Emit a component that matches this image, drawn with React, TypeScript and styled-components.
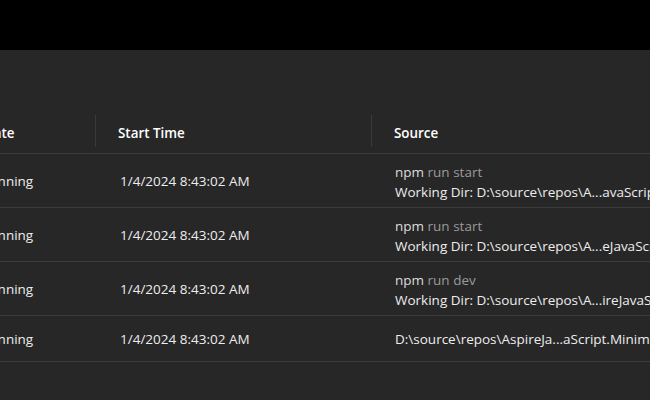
import styled, { createGlobalStyle } from "styled-components";

const GlobalStyle = createGlobalStyle`
  html, body {
    margin: 0;
    padding: 0;
    background: #272727;
    overflow: hidden;
  }
  body {
    font-family: "Open Sans", "Noto Sans", sans-serif;
  }
`;

const Page = styled.div`
  width: 650px;
  height: 400px;
  display: flex;
  flex-direction: column;
  background: #272727;
  overflow: hidden;
`;

const TopBar = styled.div`
  height: 50px;
  flex-shrink: 0;
  background: #000000;
`;

const GridArea = styled.div`
  padding-top: 63px;
  margin-left: -42px;
`;

const Grid = styled.div`
  display: grid;
  grid-template-columns: 137px 276px 420px;
`;

const HeaderCell = styled.div<{ $divider?: boolean }>`
  position: relative;
  height: 40px;
  display: flex;
  align-items: center;
  padding-left: 23px;
  color: #ffffff;
  font-size: 13.4px;
  font-weight: 600;
  border-bottom: 1px solid #3b3b3b;
  white-space: nowrap;
  ${({ $divider }) =>
    $divider &&
    `&::before {
      content: "";
      position: absolute;
      left: 0;
      top: 2px;
      height: 32px;
      width: 1px;
      background: #3a3a3a;
    }`}
`;

const Cell = styled.div<{ $tall?: boolean; $inset?: number }>`
  height: ${({ $tall }) => ($tall ? "53px" : "45px")};
  display: flex;
  flex-direction: column;
  justify-content: center;
  padding-left: ${({ $inset }) => $inset ?? 23}px;
  color: #ededed;
  font-size: 13.5px;
  line-height: 20px;
  border-bottom: 1px solid #3b3b3b;
  white-space: nowrap;
  overflow: hidden;
`;

const Command = styled.div`
  color: #dcdcdc;
  padding-top: 2px;
`;

const Args = styled.span`
  color: #9a9a9a;
`;

const Line = styled.div`
  color: #ededed;
`;

type Resource = {
  state: string;
  start: string;
  command?: string;
  args?: string;
  source: string;
};

const resources: Resource[] = [
  {
    state: "Running",
    start: "1/4/2024 8:43:02 AM",
    command: "npm",
    args: "run start",
    source: "Working Dir: D:\\source\\repos\\A...avaScript.Angular",
  },
  {
    state: "Running",
    start: "1/4/2024 8:43:02 AM",
    command: "npm",
    args: "run start",
    source: "Working Dir: D:\\source\\repos\\A...eJavaScript.React",
  },
  {
    state: "Running",
    start: "1/4/2024 8:43:02 AM",
    command: "npm",
    args: "run dev",
    source: "Working Dir: D:\\source\\repos\\A...ireJavaScript.Vue",
  },
  {
    state: "Running",
    start: "1/4/2024 8:43:02 AM",
    source: "D:\\source\\repos\\AspireJa...aScript.MinimalApi.csproj",
  },
];

const App = () => {
  return (
    <Page>
      <GlobalStyle />
      <TopBar />
      <GridArea>
        <Grid>
          <HeaderCell>State</HeaderCell>
          <HeaderCell $divider>Start Time</HeaderCell>
          <HeaderCell $divider>Source</HeaderCell>
          {resources.map((r, i) => {
            const tall = !!r.command;
            return [
              <Cell key={`s${i}`} $tall={tall}>
                {r.state}
              </Cell>,
              <Cell key={`t${i}`} $tall={tall} $inset={25}>
                {r.start}
              </Cell>,
              <Cell key={`c${i}`} $tall={tall} $inset={24}>
                {r.command && (
                  <Command>
                    {r.command} <Args>{r.args}</Args>
                  </Command>
                )}
                <Line>{r.source}</Line>
              </Cell>,
            ];
          })}
        </Grid>
      </GridArea>
    </Page>
  );
};

export default App;
